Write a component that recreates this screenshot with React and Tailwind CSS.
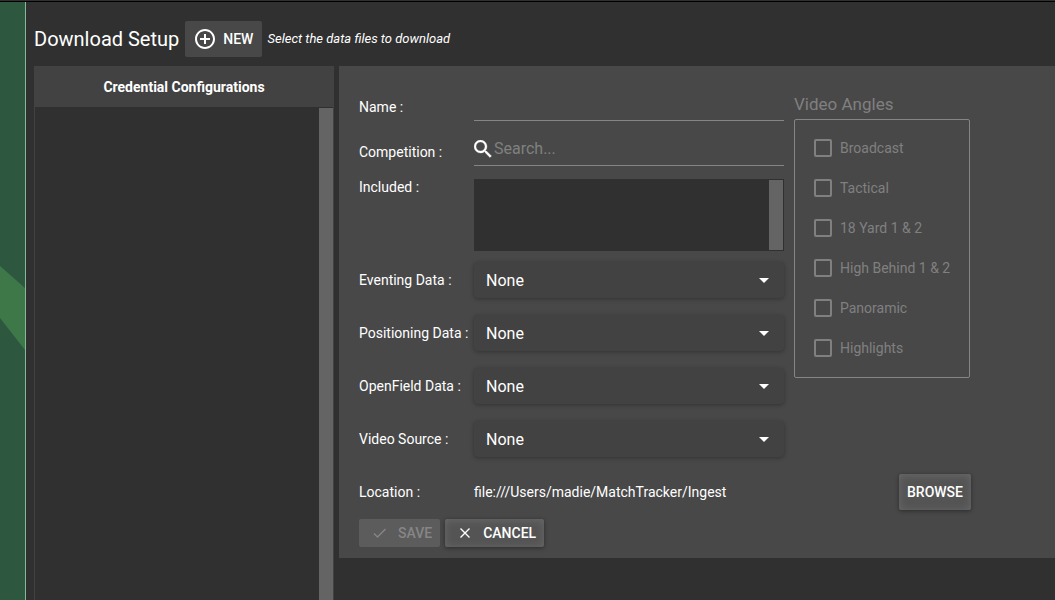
import { MdAddCircleOutline, MdArrowDropDown } from "react-icons/md";

const ANGLES = ["Broadcast", "Tactical", "18 Yard 1 & 2", "High Behind 1 & 2", "Panoramic", "Highlights"];
const SOURCES = ["Eventing Data", "Positioning Data", "OpenField Data", "Video Source"];
const ROW = "grid grid-cols-[115px_minmax(0,1fr)]";
const RAISED =
  "rounded-xs bg-[#545454] font-medium shadow-[inset_0_1px_8px_rgba(255,255,255,0.13),0_1px_4px_rgba(0,0,0,0.4)]";

function SourceRow({ label }) {
  const id = label.toLowerCase().replace(" ", "-");
  return (
    <div className={`${ROW} items-center`}>
      <label htmlFor={id}>{label} :</label>
      <div className="grid items-center">
        <select
          id={id}
          className="col-start-1 row-start-1 h-9 w-full appearance-none rounded-sm bg-[#424242] px-3 pt-0.5 text-base shadow-[0_1px_4px_rgba(0,0,0,0.3)] outline-none"
        >
          <option>None</option>
        </select>
        <MdArrowDropDown className="pointer-events-none col-start-1 row-start-1 mr-2 size-6 justify-self-end" />
      </div>
    </div>
  );
}

function SidePitch() {
  return (
    <aside className="w-[26px] shrink-0 overflow-hidden border-r border-[#86b898] bg-[#2d573f]">
      <svg width="25" height="598" viewBox="0 0 25 598" aria-hidden="true">
        <path d="M0 264 L25 286 V348 L0 316 Z" fill="#3f7848" />
      </svg>
    </aside>
  );
}

function Credentials() {
  return (
    <section className="flex w-[300px] shrink-0 flex-col">
      <h2 className="flex h-[41px] items-center justify-center bg-[#424242] font-bold">
        Credential Configurations
      </h2>
      <div className="flex flex-1 justify-end border-x border-[#424242] pt-px">
        <div className="w-3.5 bg-[#646464]" />
      </div>
    </section>
  );
}

function VideoAngles() {
  return (
    <fieldset disabled className="w-44 shrink-0 text-[#808080]">
      <legend className="h-[33px] pt-0.5 text-[17px] leading-8">Video Angles</legend>
      <div className="rounded-xs border border-[#858585] pt-2 pb-[9px] pl-[19px]">
        {ANGLES.map((angle) => (
          <label key={angle} className="flex h-10 items-center gap-2">
            <input
              type="checkbox"
              className="size-[18px] appearance-none rounded-xs border-2 border-[#808080]"
            />
            {angle}
          </label>
        ))}
      </div>
    </fieldset>
  );
}

function ConfigForm() {
  return (
    <form className="min-w-0 flex-1 self-start bg-[#484848] px-5 pt-5 pb-[11px]">
      <div className="max-w-[612px]">
        <div className="flex gap-2.5">
          <div className="flex max-w-[425px] min-w-0 flex-1 flex-col">
            <div className={ROW}>
              <label htmlFor="name" className="pt-[13px]">Name :</label>
              <input id="name" className="h-[35px] w-full border-b border-[#858585] bg-transparent text-base outline-none" />
            </div>
            <div className={`${ROW} mt-2.5`}>
              <label htmlFor="competition" className="pt-[13px]">Competition :</label>
              <div className="flex h-[35px] items-center border-b border-[#858585] pt-0.5">
                <svg viewBox="3 3 18 18" className="size-[18px] shrink-0" fill="currentColor" aria-hidden="true">
                  <path
                    stroke="currentColor"
                    strokeWidth="0.3"
                    d="M15.5 14h-.79l-.28-.27A6.471 6.471 0 0 0 16 9.500 6.500 6.500 0 1 0 9.500 16c1.610 0 3.090-.59 4.230-1.570l.27.28v.79l5 4.990L20.490 19l-4.990-5zm-6 0C7.010 14 5 11.990 5 9.500S7.010 5 9.500 5 14 7.010 14 9.500 11.990 14 9.500 14z"
                  />
                </svg>
                <input
                  id="competition"
                  placeholder="Search..."
                  className="w-full min-w-0 bg-transparent pl-0.5 text-base outline-none placeholder:text-[#808080]"
                />
              </div>
            </div>
            <div className={`${ROW} mt-[13px]`}>
              <span id="included">Included :</span>
              <div role="listbox" aria-labelledby="included" className="flex h-[72px] justify-end bg-[#303030] p-px">
                <div className="w-3.5 bg-[#646464]" />
              </div>
            </div>
            <div className="mt-[11px] flex flex-col gap-[17px]">
              {SOURCES.map((label) => (
                <SourceRow key={label} label={label} />
              ))}
            </div>
          </div>
          <VideoAngles />
        </div>
        <div className={`${ROW} mt-[17px] items-center`}>
          <span>Location :</span>
          <div className="flex items-center justify-between">
            <span>file:///Users/madie/MatchTracker/Ingest</span>
            <button type="button" className={`${RAISED} h-9 px-2`}>BROWSE</button>
          </div>
        </div>
      </div>
      <div className="mt-[9px] flex gap-[5px]">
        <button type="button" disabled className="flex h-7 items-center gap-[11px] rounded-xs bg-[#5c5c5c] pr-2 pl-3.5 font-medium text-[#868686]">
          <svg viewBox="0 0 14 14" className="size-3.5" fill="none" stroke="currentColor" strokeWidth="1.3" aria-hidden="true">
            <path d="M1 7.500 L4.500 11 L12.500 3" />
          </svg>
          SAVE
        </button>
        <button type="button" className={`${RAISED} flex h-7 items-center gap-[11px] pr-2 pl-[13px]`}>
          <svg viewBox="0 0 14 14" className="size-3.5" fill="none" stroke="currentColor" strokeWidth="1.4" aria-hidden="true">
            <path d="M2.500 2.500 L11.500 11.500 M11.500 2.500 L2.500 11.500" />
          </svg>
          CANCEL
        </button>
      </div>
    </form>
  );
}

export default function App() {
  return (
    <div className="flex min-h-screen flex-col bg-[#303030] font-[Roboto,sans-serif] text-sm leading-4 text-white">
      <div className="h-0.5 border-b border-black" />
      <div className="flex flex-1">
        <SidePitch />
        <main className="flex min-w-0 flex-1 flex-col pl-2">
          <header className="flex h-16 items-center pt-[9px]">
            <h1 className="text-xl leading-6">Download Setup</h1>
            <button type="button" className="ml-1.5 flex h-9 items-center gap-1.5 rounded-xs bg-[#484848] pr-[9px] pl-2 font-medium">
              <MdAddCircleOutline className="size-6" />
              NEW
            </button>
            <p className="ml-[5px] text-[13px] italic">Select the data files to download</p>
          </header>
          <div className="flex flex-1 gap-[5px]">
            <Credentials />
            <ConfigForm />
          </div>
        </main>
      </div>
    </div>
  );
}
